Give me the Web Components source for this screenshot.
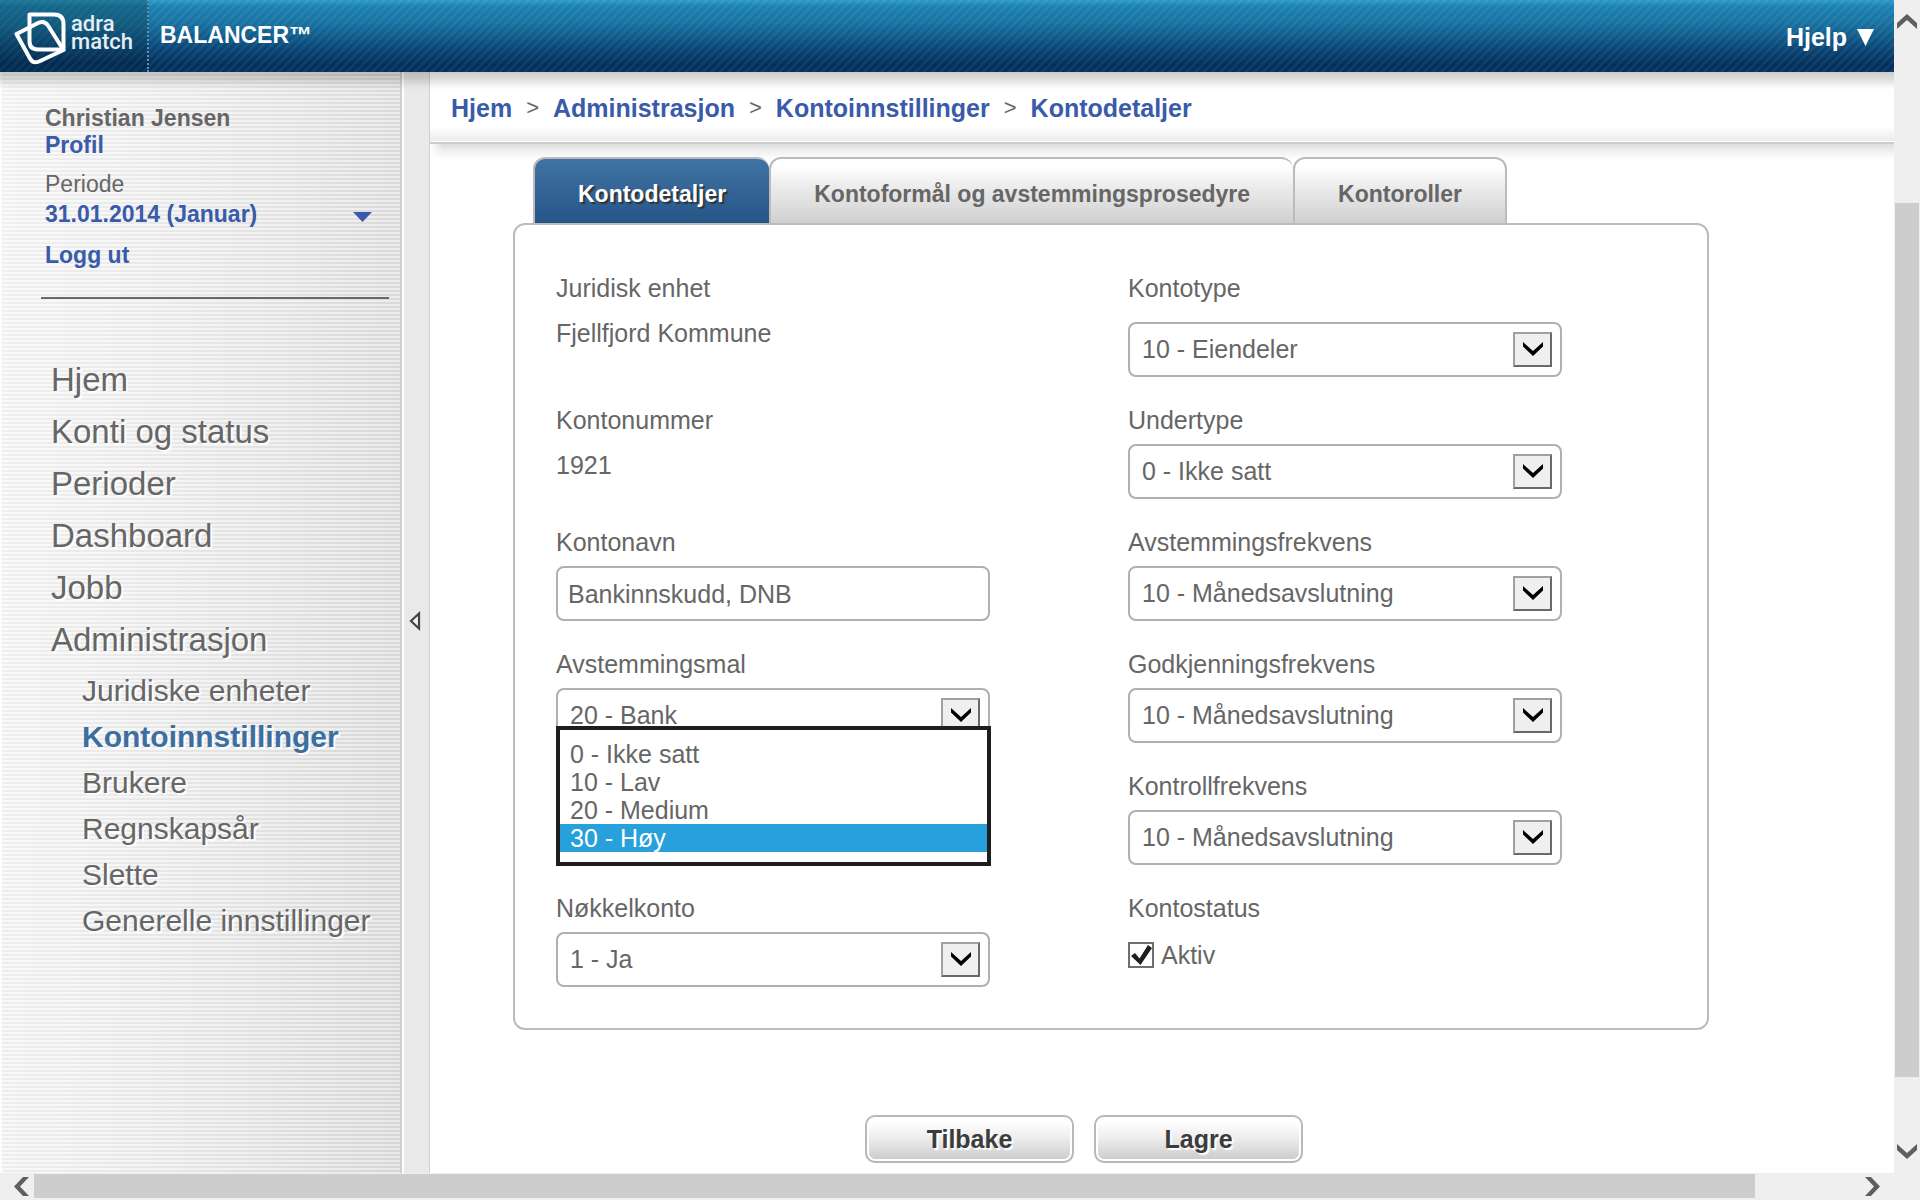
<!DOCTYPE html>
<html lang="nb">
<head>
<meta charset="utf-8">
<title>Balancer – Kontodetaljer</title>
<style>
  html, body { margin: 0; height: 100%; }
  body { font: 25px/30px "Liberation Sans", Arial, sans-serif; color: #666; background: #fff; overflow: hidden; --link: #3a5aaa; }
</style>
</head>
<body>
<balancer-app>
  <app-header slot="header"></app-header>
  <side-panel slot="side"></side-panel>
  <crumb-trail slot="main"></crumb-trail>
  <account-form slot="main"></account-form>
</balancer-app>

<script>
const define = (name, html) => customElements.define(name, class extends HTMLElement {
  connectedCallback() {
    if (this.shadowRoot) return;
    const t = document.createElement('template');
    t.innerHTML = typeof html === 'function' ? html(this) : html;
    this.attachShadow({ mode: 'open' }).append(t.content.cloneNode(true));
  }
});

/* Window frame: content area with a vertical and a horizontal scroll track */
define('balancer-app', `
<style>
  :host { display: grid; grid-template: minmax(0, 1fr) 27px / minmax(0, 1fr) 26px; height: 100vh; background: #efefef; }
  .view { display: flex; flex-direction: column; background: #fff; overflow: hidden; }
  .body { flex: 1; min-height: 0; display: flex; position: relative; }
  .body::before { content: ""; position: absolute; inset: 0 0 auto 0; height: 18px; z-index: 2; pointer-events: none;
    background: linear-gradient(rgba(0,0,0,.2), rgba(0,0,0,.14) 35%, rgba(0,0,0,.04) 75%, transparent); }
  .main { flex: 1; min-width: 0; }
  .corner { background: #efefef; }
</style>
<div class="view">
  <slot name="header"></slot>
  <div class="body"><slot name="side"></slot><div class="main"><slot name="main"></slot></div></div>
</div>
<scroll-track dir="v"></scroll-track>
<scroll-track dir="h"></scroll-track>
<div class="corner"></div>`);

define('scroll-track', el => {
  const v = el.getAttribute('dir') === 'v';
  const up = '<svg width="20" height="15" viewBox="0 0 20 15"><path fill="#5f5f5f" d="M10 0 20 9V15L10 6 0 15V9Z"/></svg>';
  const down = '<svg width="20" height="15" viewBox="0 0 20 15"><path fill="#5f5f5f" d="M10 15 20 6V0L10 9 0 0V6Z"/></svg>';
  const left = '<svg width="15" height="19" viewBox="0 0 15 19"><path fill="#5f5f5f" d="M0 9.500 9 0H15L6 9.500 15 19H9Z"/></svg>';
  const right = '<svg width="15" height="19" viewBox="0 0 15 19"><path fill="#5f5f5f" d="M15 9.500 6 0H0L9 9.500 0 19H6Z"/></svg>';
  return `
<style>
  :host { display: flex; flex-direction: ${v ? 'column' : 'row'}; background: #efefef; align-items: stretch; }
  svg { display: block; }
  button { appearance: none; border: 0; margin: 0; padding: 0; background: none; flex: none; display: flex; justify-content: center; align-items: center;
    ${v ? 'height: 43px' : 'width: 43px'}; }
  .h1 { width: 34px; padding-left: 9px; box-sizing: border-box; }
  .rail { flex: 1; display: flex; flex-direction: inherit; ${v ? 'padding: 0 1px' : 'padding: 1px 0 2px'}; }
  .before { flex: ${v ? 160 : 0}; } .thumb { flex: ${v ? 874 : 1721}; background: #cdcdcd; } .after { flex: ${v ? 53 : 96}; }
</style>
<button class="${v ? '' : 'h1'}" aria-label="${v ? 'Rull opp' : 'Rull til venstre'}">${v ? up : left}</button>
<div class="rail"><div class="before"></div><div class="thumb"></div><div class="after"></div></div>
<button aria-label="${v ? 'Rull ned' : 'Rull til høyre'}">${v ? down : right}</button>`;
});

define('app-header', `
<style>
  :host { display: flex; height: 72px; flex: none; color: #fff; font-weight: bold;
    background:
      repeating-linear-gradient(135deg, transparent 0, rgba(255,255,255,.08) 2px, transparent 4px, transparent 6px),
      linear-gradient(#2c9cca 0, #1c82b3 6px, #17709f 24px, #0b4a7a 46px, #032f5b 64px, #03325f); }
  .logo { box-sizing: border-box; width: 149px; display: flex; align-items: flex-start; padding: 12px 0 0 14px; gap: 4px;
    background: linear-gradient(rgba(0,40,40,.3), rgba(0,20,40,.2)); border-right: 2px dotted #5f93b5; }
  svg { display: block; flex: none; }
  .word { font: 500 22px/18px Roboto, "Open Sans", sans-serif; padding-top: 3px; color: #e4eef4; }
  .word span { display: block; }
  .name { font-size: 23px; line-height: 30px; padding: 20px 0 0 11px; flex: 1; }
  .help { appearance: none; border: 0; background: none; color: inherit; font: bold 25px/30px "Liberation Sans", Arial, sans-serif; padding: 22px 20px 0 0; height: 52px; display: flex; gap: 10px; align-items: center; }
</style>
<div class="logo">
  <svg width="53" height="53" viewBox="0 0 53 53" fill="none" stroke="#fff" stroke-width="4" stroke-linejoin="round">
    <path d="M15.500 2.500H40Q49.500 2.500 49.500 12V37.500H24Q15.500 37.500 15.500 29Z"/>
    <path d="M2.500 22 24 11Q30.500 8 34 13.500L49.500 38 25 49.500Q19 52 16 46.500Z"/>
  </svg>
  <div class="word"><span>adra</span><span>match</span></div>
</div>
<div class="name">BALANCER™</div>
<button class="help">Hjelp <svg width="17" height="17" viewBox="0 0 17 17"><path fill="#fff" d="M0 0H17L8.500 17Z"/></svg></button>`);

define('side-panel', `
<style>
  :host { display: flex; flex: none; }
  .panel { box-sizing: border-box; width: 402px; border-right: 2px solid #cfcfcf; padding: 33px 11px 0 41px;
    background:
      linear-gradient(90deg, rgba(255,255,255,.8) 2px, transparent 2px),
      repeating-linear-gradient(rgba(255,255,255,.35) 0 2px, rgba(0,0,0,.035) 2px 4px),
      linear-gradient(93deg, #f8f8f8 0%, #f4f4f4 25%, #ebebeb 60%, #dedede 100%); }
  .rail { box-sizing: border-box; width: 28px; border-left: 2px solid #fff; border-right: 1px solid #d0d0d0; background: #e9e9e9; display: flex; align-items: center; padding: 0 0 4px 5px; }
  button { appearance: none; border: 0; background: none; padding: 0; margin: 0; display: block; }
  svg { display: block; }
  a { text-decoration: none; color: inherit; }
  .user { font-size: 23px; line-height: 27px; padding: 0 17px 28px 4px; border-bottom: 2px solid #696969; }
  .user b, .user a { display: block; font-weight: bold; }
  .user a { color: var(--link); }
  .user .cap { margin-top: 12px; }
  .period { display: flex; width: 100%; justify-content: space-between; align-items: center; font: inherit; font-weight: bold; color: var(--link); margin: 3px 0 14px; text-align: left; }
  .period svg { margin-top: 4px; }
  nav { font-size: 33px; line-height: 52px; padding: 55px 0 0 10px; text-shadow: 2px 2px 1px #fff; }
  ul { list-style: none; margin: 0; padding: 0; }
  ul ul { font-size: 30px; line-height: 46px; padding: 2px 0 0 31px; white-space: nowrap; }
  a[aria-current] { color: #3c6e9f; font-weight: bold; }
  nav a { display: block; }
</style>
<div class="panel">
  <div class="user">
    <b>Christian Jensen</b>
    <a href="#profil">Profil</a>
    <div class="cap">Periode</div>
    <button class="period">31.01.2014 (Januar)<svg width="19" height="10" viewBox="0 0 19 10"><path fill="#3a5aaa" d="M0 0H19L9.500 10Z"/></svg></button>
    <a href="#ut">Logg ut</a>
  </div>
  <nav><ul>
    <li><a href="#hjem">Hjem</a></li>
    <li><a href="#konti">Konti og status</a></li>
    <li><a href="#perioder">Perioder</a></li>
    <li><a href="#dashboard">Dashboard</a></li>
    <li><a href="#jobb">Jobb</a></li>
    <li><a href="#adm">Administrasjon</a>
      <ul>
        <li><a href="#enheter">Juridiske enheter</a></li>
        <li><a href="#innst" aria-current="page">Kontoinnstillinger</a></li>
        <li><a href="#brukere">Brukere</a></li>
        <li><a href="#aar">Regnskapsår</a></li>
        <li><a href="#slette">Slette</a></li>
        <li><a href="#generelle">Generelle innstillinger</a></li>
      </ul>
    </li>
  </ul></nav>
</div>
<div class="rail"><button aria-label="Skjul meny"><svg width="12" height="20" viewBox="0 0 12 20"><path fill="#f4f4f4" stroke="#444" stroke-width="2.200" d="M10 2.500V17.500L2 10Z"/></svg></button></div>`);

define('crumb-trail', `
<style>
  :host { display: block; position: relative; }
  nav { display: flex; align-items: center; gap: 14px; height: 70px; padding: 1px 21px 0; box-sizing: border-box;
    background: linear-gradient(transparent 78%, #ececec 98%, #fff 98%); box-shadow: 0 2px 0 #cbcbcb; }
  :host::after { content: ""; position: absolute; top: 72px; left: 0; right: 0; height: 16px;
    background: linear-gradient(rgba(0,0,0,.13), rgba(0,0,0,.05) 50%, transparent); -webkit-mask: linear-gradient(90deg, transparent, #000 12px); }
  a { color: var(--link); font-weight: bold; text-decoration: none; }
  span { font-size: 22px; }
</style>
<nav aria-label="Sti">
  <a href="#hjem">Hjem</a><span>&gt;</span><a href="#adm">Administrasjon</a><span>&gt;</span><a href="#innst">Kontoinnstillinger</a><span>&gt;</span><a href="#detaljer">Kontodetaljer</a>
</nav>`);

define('tab-strip', `
<style>
  :host { display: flex; padding-left: 20px; position: relative; }
  button { appearance: none; margin: 0; height: 66px; box-sizing: border-box; padding: 5px 43px 0; border: 2px solid #bbb; border-width: 2px 0 0 2px;
    border-radius: 12px 12px 0 0; background: linear-gradient(#fff 10%, #ebebeb 45%, #d0d0d0); color: #666;
    font: bold 23px/30px "Liberation Sans", Arial, sans-serif; }
  button:last-child { border-right-width: 2px; }
  button[aria-selected=true] { background: linear-gradient(#4073a3, #265587); color: #fff; text-shadow: 2px 2px 1px #333; }
</style>
<button role="tab" aria-selected="true">Kontodetaljer</button><button role="tab">Kontoformål og avstemmingsprosedyre</button><button role="tab">Kontoroller</button>`);

const fieldBase = `
  :host { display: flex; flex-direction: column; min-width: 0; }
  label, .cap { display: block; line-height: 30px; }
  :host([loose]) label { margin-bottom: 10px; }`;

define('text-value', el => `
<style>${fieldBase} :host { gap: 15px; }</style>
<div class="cap">${el.getAttribute('label')}</div><div class="cap">${el.getAttribute('value')}</div>`);

define('text-field', el => `
<style>${fieldBase} :host { gap: 9px; }
  input { box-sizing: border-box; width: 100%; height: 55px; border: 2px solid #b0b0b0; border-radius: 8px; padding: 2px 10px 0; margin: 0; font: inherit; color: inherit; background: #fff; outline: 0; }
</style>
<label for="f">${el.getAttribute('label')}</label><input id="f" type="text" value="${el.getAttribute('value')}">`);

define('select-field', el => `
<style>${fieldBase} :host { gap: 9px; }
  .box { display: grid; position: relative; }
  .box > select, .box > .arrow { grid-area: 1 / 1; }
  select { appearance: none; box-sizing: border-box; width: 100%; height: 55px; border: 2px solid #b0b0b0; border-radius: 8px; padding: 0 60px 2px 12px; margin: 0; font: inherit; color: inherit; background: #fff; outline: 0; }
  .arrow { justify-self: end; align-self: center; margin-right: 10px; box-sizing: border-box; width: 39px; height: 35px; border: 2px solid; border-color: #a0a0a0 #696969 #696969 #a0a0a0; background: #efefef; pointer-events: none; display: flex; align-items: center; justify-content: center; padding-bottom: 2px; }
  svg { display: block; }
</style>
<label for="f">${el.getAttribute('label')}</label>
<div class="box">
  <select id="f"><option>${el.getAttribute('value')}</option></select>
  <span class="arrow"><svg width="20" height="14" viewBox="0 0 20 14"><path d="M0 0 10 9 20 0V4.500L10 14 0 4.500Z"/></svg></span>
  <slot></slot>
</div>`);

define('option-menu', el => `
<style>
  :host { display: block; position: absolute; z-index: 3; top: 38px; left: 0; right: -1px; border: 4px solid #1e1e1e; background: #fff; padding: 10px 0; }
  ul { list-style: none; margin: 0; padding: 0; }
  li { line-height: 28px; padding: 0 10px; }
  li[aria-selected=true] { background: #27a0dc; color: #fff; }
</style>
<ul role="listbox">${el.getAttribute('items').split('|').map((t, i, a) => `<li role="option"${i === a.length - 1 ? ' aria-selected="true"' : ''}>${t}</li>`).join('')}</ul>`);

define('check-field', el => `
<style>${fieldBase} :host { gap: 19px; }
  .row { display: flex; align-items: center; gap: 7px; height: 26px; }
  .tick { display: grid; }
  .tick > * { grid-area: 1 / 1; }
  input { appearance: none; box-sizing: border-box; margin: 0; width: 26px; height: 26px; border: 2px solid #6e6e6e; background: #fff; }
  svg { pointer-events: none; display: none; }
  input:checked + svg { display: block; }
  .row label { line-height: 26px; }
</style>
<div class="cap">${el.getAttribute('label')}</div>
<div class="row"><span class="tick"><input type="checkbox" id="c" checked><svg width="26" height="26" viewBox="0 0 26 26"><path fill="#1e1e1e" d="M3 14 7 11 11.500 16.500 20 3 24 6 12.500 23Z"/></svg></span><label for="c">${el.getAttribute('value')}</label></div>`);

define('push-button', `
<style>
  :host { display: block; }
  button { appearance: none; display: block; width: 209px; height: 48px; margin: 0; padding: 0; border: 2px solid #b8b8b8; border-radius: 10px;
    box-shadow: inset 0 0 0 2px #fff; background: linear-gradient(#fff 10%, #ececec 50%, #cdcdcd 95%); color: #3c3c3c;
    font: bold 25px/40px "Liberation Sans", Arial, sans-serif; text-shadow: 2px 2px 1px #fff; }
</style>
<button type="button"><slot></slot></button>`);

define('account-form', `
<style>
  :host { display: block; padding: 15px 185px 0 83px; }
  .panel { display: grid; grid-template-columns: repeat(2, minmax(0, 434px)); column-gap: 138px; row-gap: 28px;
    grid-template-rows: 104px repeat(5, 94px); border: 2px solid #bbb; border-radius: 12px; padding: 48px 41px 41px; background: #fff; }
  .low { grid-row: 6; grid-column: 1; }
  .r { grid-column: 2; }
  .actions { display: flex; gap: 20px; padding: 85px 0 0 352px; }
</style>
<tab-strip></tab-strip>
<div class="panel">
  <text-value label="Juridisk enhet" value="Fjellfjord Kommune"></text-value>
  <select-field loose class="r" label="Kontotype" value="10 - Eiendeler"></select-field>
  <text-value label="Kontonummer" value="1921"></text-value>
  <select-field class="r" label="Undertype" value="0 - Ikke satt"></select-field>
  <text-field label="Kontonavn" value="Bankinnskudd, DNB"></text-field>
  <select-field class="r" label="Avstemmingsfrekvens" value="10 - Månedsavslutning"></select-field>
  <select-field label="Avstemmingsmal" value="20 - Bank"><option-menu items="0 - Ikke satt|10 - Lav|20 - Medium|30 - Høy"></option-menu></select-field>
  <select-field class="r" label="Godkjenningsfrekvens" value="10 - Månedsavslutning"></select-field>
  <select-field class="r" label="Kontrollfrekvens" value="10 - Månedsavslutning"></select-field>
  <select-field class="low" label="Nøkkelkonto" value="1 - Ja"></select-field>
  <check-field class="r" label="Kontostatus" value="Aktiv"></check-field>
</div>
<div class="actions"><push-button>Tilbake</push-button><push-button>Lagre</push-button></div>`);
</script>
</body>
</html>
